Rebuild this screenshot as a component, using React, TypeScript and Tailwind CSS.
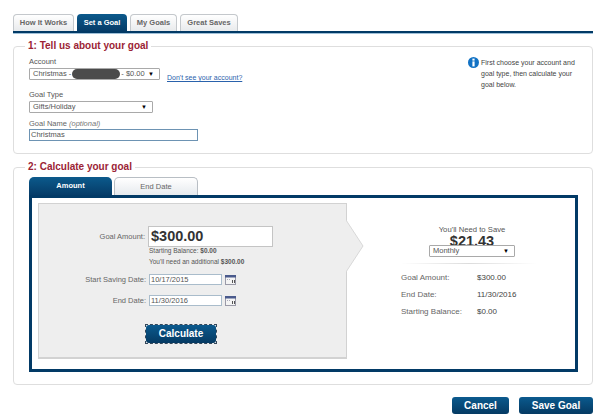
import React from "react";

function Select({ w, text, children }: { w: string; text?: string; children?: React.ReactNode }) {
  return (
    <div className={`${w} text-[7.5px] h-[12px] border border-[#a9a9a9] bg-white flex items-center justify-between pl-[3px] pr-[5px] text-[#555] leading-none rounded-[1px] whitespace-nowrap`}>
      <span className="flex items-center">{text}{children}</span>
      <span className="text-[6px] text-black">▼</span>
    </div>
  );
}

function Cal() {
  return (
    <svg width="11" height="10" viewBox="0 0 11 10" className="ml-[3px] shrink-0">
      <rect x="0.5" y="0.5" width="10" height="9" fill="#f4f4f4" stroke="#9a9aa8" />
      <rect x="0" y="0" width="11" height="2.5" fill="#4a5a8c" />
      <rect x="7" y="5" width="1" height="3" fill="#555" />
      <rect x="9" y="5" width="1" height="3" fill="#555" />
      <rect x="2" y="4" width="1" height="1" fill="#aab" />
      <rect x="4" y="4" width="1" height="1" fill="#aab" />
    </svg>
  );
}

function Tab({ children, active, w }: { children: string; active?: boolean; w: string }) {
  return (
    <div
      className={`${w} h-[17px] flex items-center justify-center rounded-t-[4px] text-[7.5px] font-bold leading-none ${
        active
          ? "bg-gradient-to-b from-[#0c5a8c] to-[#063c68] text-white"
          : "border border-b-0 border-[#c4c8cc] bg-gradient-to-b from-white to-[#e8eaec] text-[#666]"
      }`}
    >
      {children}
    </div>
  );
}

function Btn({ children, w }: { children: string; w: string }) {
  return (
    <div className={`${w} h-[17px] rounded-[3px] bg-gradient-to-b from-[#0b5a8e] to-[#053a63] text-white text-[10px] font-bold flex items-center justify-center leading-none`}>
      {children}
    </div>
  );
}

export default function App() {
  return (
    <div
      className="w-[600px] h-[415px] bg-white overflow-hidden pl-[13px] pr-[7px] pt-[14px] text-[#555] leading-none"
      style={{ fontFamily: '"Liberation Sans", Arial, sans-serif' }}
    >
      {/* top tabs */}
      <div className="flex gap-[3px] h-[17px]">
        <Tab w="w-[61px]">How It Works</Tab>
        <Tab w="w-[50px]" active>Set a Goal</Tab>
        <Tab w="w-[47px]">My Goals</Tab>
        <Tab w="w-[58px]">Great Saves</Tab>
      </div>
      <div className="h-[3px] bg-[#023a66] border-b border-[#9fc0d8]" />

      {/* section 1 */}
      <section className="relative mt-[12px] h-[108px] border border-[#dedede] rounded-[4px] flex justify-between">
        <h2 className="absolute left-[11px] top-[-6px] bg-white px-[3px] text-[10px] font-bold text-[#9b2335] leading-none">
          1: Tell us about your goal
        </h2>
        <div className="pl-[15px] pt-[11px]">
          <div className="h-[8px] text-[7.5px] text-[#555] leading-none mb-[2px]">Account</div>
          <div className="flex items-end">
            <Select w="w-[131px]">
              Christmas -
              <span className="inline-block w-[48px] h-[10px] rounded-full bg-[#4b4b4b] mx-[1px]" />
              - $0.00
            </Select>
            <a className="ml-[7px] text-[7px] text-[#2a62ac] underline leading-none mb-[-1px]">Don't see your account?</a>
          </div>
          <div className="h-[8px] text-[7.5px] text-[#555] leading-none mt-[11px] mb-[2px]">Goal Type</div>
          <Select w="w-[124px]" text="Gifts/Holiday" />
          <div className="h-[8px] text-[7.5px] text-[#666] leading-none mt-[7px] mb-[1px]">
            Goal Name <i className="text-[#777]">(optional)</i>
          </div>
          <div className="w-[169px] h-[12px] border border-[#6d93b3] bg-white text-[7.5px] text-[#555] flex items-center pl-[1px]">Christmas</div>
        </div>
        <div className="flex w-[124px] pt-[10px]">
          <svg width="11" height="11" viewBox="0 0 11 11" className="shrink-0 mr-[2px]">
            <circle cx="5.5" cy="5.5" r="5.5" fill="#1272c4" />
            <rect x="4.4" y="1.6" width="2.2" height="2" fill="#fff" />
            <rect x="4.4" y="4.4" width="2.2" height="5" fill="#fff" />
          </svg>
          <p className="w-[100px] text-[7px] leading-[11px] text-[#444] m-0">
            First choose your account and goal type, then calculate your goal below.
          </p>
        </div>
      </section>

      {/* section 2 */}
      <section className="relative mt-[13px] h-[218px] border border-[#dedede] rounded-[4px] pl-[15px] pt-[9px]">
        <h2 className="absolute left-[11px] top-[-6px] bg-white px-[3px] text-[10px] font-bold text-[#9b2335] leading-none">
          2: Calculate your goal
        </h2>
        <div className="flex gap-[2px] h-[18px]">
          <div className="w-[83px] rounded-t-[5px] bg-gradient-to-b from-[#0c5a8c] to-[#063c68] text-white text-[7.5px] font-bold flex items-center justify-center">Amount</div>
          <div className="w-[84px] rounded-t-[5px] border border-b-0 border-[#b8bec4] bg-gradient-to-b from-white to-[#e6eaee] text-[#666] text-[7.5px] flex items-center justify-center">End Date</div>
        </div>
        <div className="w-[549px] h-[177px] border-[3px] border-[#023a66] bg-white flex pl-[6px] pt-[5px]">
          {/* gray panel */}
          <div className="relative w-[309px] h-[156px] bg-[#eeeeee] border border-[#d2d2d2] border-b-2 shrink-0">
            <svg width="18" height="54" viewBox="0 0 18 54" className="absolute left-[307px] top-[16px]">
              <path d="M0 0 L17 26 L0 52" fill="#eeeeee" stroke="#d8d8d8" />
            </svg>
            <div className="pl-[52px] pt-[22px]">
              <div className="flex items-center">
                <span className="w-[54px] text-right text-[7.5px] mr-[3px] text-[#666]">Goal Amount:</span>
                <div className="w-[125px] h-[21px] border border-[#c4c4c4] bg-white flex items-center pl-[2px] text-[14.5px] font-bold text-[#333]">$300.00</div>
              </div>
            </div>
            <div className="pl-[110px] mt-[-1px] text-[6.5px] text-[#555]">
              <div className="h-[11px] flex items-center">Starting Balance:&nbsp;<b>$0.00</b></div>
              <div className="h-[11px] flex items-center">You'll need an additional&nbsp;<b>$300.00</b></div>
            </div>
            <div className="flex items-center justify-end w-[197px] mt-[6px]">
              <span className="text-[7.5px] mr-[3px] text-[#666]">Start Saving Date:</span>
              <div className="w-[73px] h-[11px] border border-[#a9bccb] bg-white text-[7.5px] flex items-center pl-[1px] shrink-0">10/17/2015</div>
              <Cal />
            </div>
            <div className="flex items-center justify-end w-[197px] mt-[10px]">
              <span className="text-[7.5px] mr-[3px] text-[#666]">End Date:</span>
              <div className="w-[73px] h-[11px] border border-[#a9bccb] bg-white text-[7.5px] flex items-center pl-[1px] shrink-0">11/30/2016</div>
              <Cal />
            </div>
            <div className="mt-[18px] ml-[106px] w-[72px] h-[20px] border border-dashed border-[#33475a]">
              <div className="h-full rounded-[3px] bg-gradient-to-b from-[#0b5a8e] to-[#053a63] text-white text-[10px] font-bold flex items-center justify-center">Calculate</div>
            </div>
          </div>
          {/* summary */}
          <div className="ml-[54px] w-[136px] pt-[23px]">
            <div className="w-[76px] ml-[33px] text-center text-[7.7px] text-[#555] whitespace-nowrap">You'll Need to Save</div>
            <div className="w-[76px] ml-[33px] text-center text-[14.5px] font-bold text-[#333] h-[11px]">$21.43</div>
            <div className="relative ml-[28px]">
              <Select w="w-[86px]" text="Monthly" />
            </div>
            <div className="h-px w-[136px] bg-gradient-to-r from-white via-[#dcdcdc] to-white mt-[6px]" />
            <div className="mt-[10px] grid grid-cols-[76px_1fr] gap-y-[9px] text-[8px] leading-[8px]">
              <span className="text-[#666]">Goal Amount:</span><b className="font-medium text-[#444]">$300.00</b>
              <span className="text-[#666]">End Date:</span><b className="font-medium text-[#444]">11/30/2016</b>
              <span className="text-[#666]">Starting Balance:</span><b className="font-medium text-[#444]">$0.00</b>
            </div>
          </div>
        </div>
      </section>

      <div className="flex justify-end gap-[10px] mt-[12px] w-[580px]">
        <Btn w="w-[57px]">Cancel</Btn>
        <Btn w="w-[74px]">Save Goal</Btn>
      </div>
    </div>
  );
}
